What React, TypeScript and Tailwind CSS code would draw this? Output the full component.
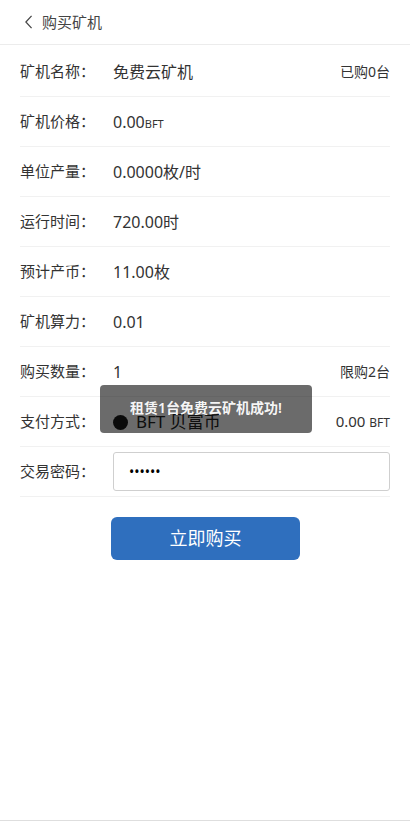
import { useState } from "react";

const rows: { label: string; value: React.ReactNode; right?: React.ReactNode }[] = [
  { label: "矿机名称：", value: "免费云矿机", right: "已购0台" },
  {
    label: "矿机价格：",
    value: (
      <>
        0.00<span className="text-[11px]">BFT</span>
      </>
    ),
  },
  { label: "单位产量：", value: "0.0000枚/时" },
  { label: "运行时间：", value: "720.00时" },
  { label: "预计产币：", value: "11.00枚" },
  { label: "矿机算力：", value: "0.01" },
  { label: "购买数量：", value: "1", right: "限购2台" },
];

export default function App() {
  const [pwd, setPwd] = useState("123456");

  return (
    <div
      className="relative flex h-[821px] flex-col bg-white text-[#333]"
      style={{ fontFamily: '"Noto Sans", "Noto Sans CJK SC", sans-serif' }}
    >
      {/* header */}
      <header className="flex h-[45px] items-center border-b border-[#ececec] pl-[24px]">
        <svg viewBox="0 0 10 16" className="h-[14px] w-[9px]" fill="none" stroke="#444" strokeWidth="1.4">
          <path d="M8.5 1 L2 8 L8.5 15" />
        </svg>
        <span className="ml-[9px] text-[15px] text-[#444]">购买矿机</span>
      </header>

      <div className="px-[20px] pt-[2px]">
        {rows.map((r) => (
          <div key={r.label} className="flex h-[50px] items-center border-b border-[#f1f1f1]">
            <span className="w-[93px] text-[15px]">{r.label}</span>
            <span className="flex-1 text-[16px]">{r.value}</span>
            {r.right && <span className="text-[14px]">{r.right}</span>}
          </div>
        ))}

        {/* payment */}
        <div className="flex h-[50px] items-center border-b border-[#f1f1f1]">
          <span className="w-[93px] text-[15px]">支付方式：</span>
          <span className="flex flex-1 items-center">
            <span className="mt-[2px] h-[15px] w-[15px] rounded-full bg-[#1a1a1a]" />
            <span className="ml-[8px] text-[17px] text-[#222]">BFT 贝富币</span>
          </span>
          <span className="text-[15px]">
            0.00 <span className="text-[12px]">BFT</span>
          </span>
        </div>

        {/* password */}
        <div className="flex h-[50px] items-center border-b border-[#f1f1f1]">
          <span className="w-[93px] text-[15px]">交易密码：</span>
          <input
            type="password"
            value={pwd}
            onChange={(e) => setPwd(e.target.value)}
            className="h-[39px] flex-1 rounded-[3px] border border-[#cfcfcf] px-[15px] text-[14px] text-black outline-none"
          />
        </div>

        <div className="flex justify-center pt-[20px]">
          <button className="ml-[1px] h-[43px] w-[189px] rounded-[6px] bg-[#2f6fbe] text-[18px] text-white">
            立即购买
          </button>
        </div>
      </div>

      <div className="mt-auto h-px bg-[#dedede]" />

      {/* toast */}
      <div className="absolute left-[100px] top-[385px] flex h-[48px] w-[212px] items-center justify-center rounded-[4px] bg-black/[0.58] pb-[4px] text-[14px] font-semibold text-white/95">
        租赁1台免费云矿机成功!
      </div>
    </div>
  );
}
